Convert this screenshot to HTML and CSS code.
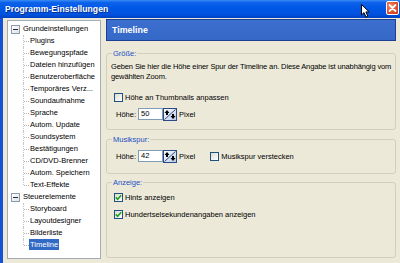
FILE: index.html
```html
<!DOCTYPE html>
<html>
<head>
<meta charset="utf-8">
<link rel="stylesheet" href="styles.css">
</head>
<body>
<div class="window">
  <div class="titlebar">
    <span class="title">Programm-Einstellungen</span>
    <div class="close">
      <svg width="13" height="14" viewBox="0 0 13 14"><path d="M3.5 4 L9.5 10 M9.5 4 L3.5 10" stroke="#fff" stroke-width="1.8" stroke-linecap="round"/></svg>
    </div>
    <svg class="cursor" width="10" height="14" viewBox="0 0 10 14"><path d="M0.5 0.5 L0.5 11 L3 8.6 L5 13 L6.8 12.2 L4.9 7.9 L8.2 7.9 Z" fill="#fff" stroke="#000" stroke-width="1" stroke-linejoin="round"/></svg>
  </div>
  <div class="client">
    <div class="tree">
      <div class="node"><span class="toggle"><span class="minus"></span></span><span>Grundeinstellungen</span></div>
      <div class="children">
        <div class="leaf">Plugins</div>
        <div class="leaf">Bewegungspfade</div>
        <div class="leaf">Dateien hinzufügen</div>
        <div class="leaf">Benutzeroberfläche</div>
        <div class="leaf">Temporäres Verz...</div>
        <div class="leaf">Soundaufnahme</div>
        <div class="leaf">Sprache</div>
        <div class="leaf">Autom. Update</div>
        <div class="leaf">Soundsystem</div>
        <div class="leaf">Bestätigungen</div>
        <div class="leaf">CD/DVD-Brenner</div>
        <div class="leaf">Autom. Speichern</div>
        <div class="leaf">Text-Effekte</div>
      </div>
      <div class="node"><span class="toggle"><span class="minus"></span></span><span>Steuerelemente</span></div>
      <div class="children">
        <div class="leaf">Storyboard</div>
        <div class="leaf">Layoutdesigner</div>
        <div class="leaf">Bilderliste</div>
        <div class="leaf"><span class="selected">Timeline</span></div>
      </div>
    </div>
    <div class="main">
      <div class="header">Timeline</div>
      <div class="group g1">
        <div class="legend">Größe:</div>
        <p class="desc">Geben Sie hier die Höhe einer Spur der Timeline an. Diese Angabe ist unabhängig vom<br>gewählten Zoom.</p>
        <div class="check row-check1"><span class="box"></span><span>Höhe an Thumbnails anpassen</span></div>
        <div class="field">
          <span class="flabel">Höhe:</span>
          <span class="input">50</span>
          <span class="spin"><svg width="14" height="13" viewBox="0 0 14 13"><defs><linearGradient id="sg" x1="0" y1="0" x2="1" y2="1"><stop offset="0" stop-color="#ffffff"/><stop offset="1" stop-color="#b9c9e6"/></linearGradient></defs><rect x="0.5" y="0.5" width="13" height="12" fill="url(#sg)" stroke="#2c4a86"/><path d="M1.5 11.5 L12.5 1.5" stroke="#2c4a86" stroke-width="1"/><path d="M4 2 L6.5 5 L5 5 L5 7 L3 7 L3 5 L1.5 5 Z" fill="#000"/><path d="M10 11 L12.5 8 L11 8 L11 6 L9 6 L9 8 L7.5 8 Z" fill="#000"/></svg></span>
          <span class="unit">Pixel</span>
        </div>
      </div>
      <div class="group g2">
        <div class="legend">Musikspur:</div>
        <div class="field">
          <span class="flabel">Höhe:</span>
          <span class="input">42</span>
          <span class="spin"><svg width="14" height="13" viewBox="0 0 14 13"><defs><linearGradient id="sg2" x1="0" y1="0" x2="1" y2="1"><stop offset="0" stop-color="#ffffff"/><stop offset="1" stop-color="#b9c9e6"/></linearGradient></defs><rect x="0.5" y="0.5" width="13" height="12" fill="url(#sg2)" stroke="#2c4a86"/><path d="M1.5 11.5 L12.5 1.5" stroke="#2c4a86" stroke-width="1"/><path d="M4 2 L6.5 5 L5 5 L5 7 L3 7 L3 5 L1.5 5 Z" fill="#000"/><path d="M10 11 L12.5 8 L11 8 L11 6 L9 6 L9 8 L7.5 8 Z" fill="#000"/></svg></span>
          <span class="unit">Pixel</span>
          <span class="check inline"><span class="box"></span><span>Musikspur verstecken</span></span>
        </div>
      </div>
      <div class="group g3">
        <div class="legend">Anzeige:</div>
        <div class="check c1"><span class="box checked"><svg width="7" height="7" viewBox="0 0 7 7"><path d="M0.8 3.4 L2.6 5.3 L6.2 1.2" fill="none" stroke="#21a121" stroke-width="1.6"/></svg></span><span>Hints anzeigen</span></div>
        <div class="check c2"><span class="box checked"><svg width="7" height="7" viewBox="0 0 7 7"><path d="M0.8 3.4 L2.6 5.3 L6.2 1.2" fill="none" stroke="#21a121" stroke-width="1.6"/></svg></span><span>Hundertselsekundenangaben anzeigen</span></div>
      </div>
    </div>
  </div>
</div>
</body>
</html>
```
FILE: styles.css
```css
* { box-sizing: border-box; }
html, body { margin: 0; padding: 0; }
body {
  width: 400px;
  height: 263px;
  overflow: hidden;
  background: #ece9d8;
  font-family: "Liberation Sans", Arial, sans-serif;
  font-size: 7.5px;
  color: #000;
}
.window {
  width: 400px;
  height: 263px;
  display: flex;
  flex-direction: column;
  background: #ece9d8;
}
.titlebar {
  position: relative;
  height: 18px;
  flex: none;
  display: flex;
  align-items: center;
  padding: 0 1px 1px 5px;
  background: linear-gradient(to bottom, #3a8cf6 0%, #0d62ea 14%, #0058e6 45%, #0052df 80%, #0040c0 100%);
}
.title {
  color: #fff;
  font-weight: bold;
  font-size: 8.6px;
  letter-spacing: 0.05px;
  text-shadow: 1px 1px 0 #0a2f8c;
  flex: 1;
}
.close {
  width: 13px;
  height: 14px;
  border: 1px solid #fff;
  border-radius: 2px;
  background: radial-gradient(circle at 35% 35%, #f08b6a 0%, #e0502a 55%, #c73a18 100%);
  display: flex;
  align-items: center;
  justify-content: center;
  margin-top: -2px;
}
.close svg { display: block; margin: -1px; }
.cursor {
  position: absolute;
  left: 361px;
  top: 4px;
}
.client {
  flex: 1;
  display: flex;
  align-items: flex-start;
  gap: 5px;
  border-left: 3px solid #1552d6;
  padding: 2px 0 0 4px;
}
.tree {
  width: 94px;
  height: 239px;
  background: #fff;
  border: 1px solid #a5acb5;
  padding: 2px 0 0 1px;
  line-height: 12px;
  color: #000;
}
.node {
  height: 12px;
  display: flex;
  align-items: center;
  white-space: nowrap;
}
.toggle {
  width: 9px;
  height: 9px;
  margin: 0 3px 0 2px;
  border: 1px solid #8c9cb0;
  background: linear-gradient(135deg, #fff 0%, #e2e2da 100%);
  display: flex;
  align-items: center;
  justify-content: center;
}
.minus {
  width: 5px;
  height: 1px;
  background: #1a2a60;
}
.children { padding-left: 14px; }
.leaf {
  position: relative;
  height: 12px;
  padding-left: 7px;
  white-space: nowrap;
}
.leaf::before {
  content: "";
  position: absolute;
  left: 1px;
  top: 6px;
  width: 5px;
  border-top: 1px dotted #b4b4b4;
}
.leaf::after {
  content: "";
  position: absolute;
  left: 0;
  top: 0;
  height: 12px;
  border-left: 1px dotted #c8c8c8;
}
.leaf:last-child::after { height: 6px; }
.selected {
  background: #316ac5;
  color: #fff;
  padding: 0 1px;
  margin-left: -1px;
  display: inline-block;
  line-height: 11px;
}
.main {
  width: 290px;
  height: 239px;
  margin-top: -1px;
  display: flex;
  flex-direction: column;
}
.header {
  flex: none;
  height: 22px;
  background: linear-gradient(to bottom, #3c6ecd 0%, #3569c8 100%);
  border: 1px solid #1d3f93;
  color: #fff;
  font-weight: bold;
  font-size: 8.9px;
  display: flex;
  align-items: center;
  padding-left: 5px;
}
.group {
  flex: none;
  border: 1px solid #d0d0bf;
  border-radius: 3px;
  padding: 0 4px;
}
.legend {
  width: fit-content;
  margin: -6px 0 0 1px;
  padding: 0 1px;
  background: #ece9d8;
  color: #2150c4;
  line-height: 11px;
}
.g1 { margin-top: 12px; height: 77px; }
.g2 { margin-top: 9px; height: 35px; }
.g3 { margin-top: 8px; flex: 1; }
.desc {
  margin: 3px 0 0 0;
  line-height: 10px;
  white-space: nowrap;
  letter-spacing: -0.12px;
}
.check {
  display: flex;
  align-items: center;
  height: 12px;
  white-space: nowrap;
}
.box {
  width: 9px;
  height: 9px;
  border: 1px solid #1c5180;
  background: linear-gradient(135deg, #dcdcd4 0%, #fff 100%);
  margin-right: 2px;
  display: flex;
  align-items: center;
  justify-content: center;
  flex: none;
}
.box svg { display: block; }
.row-check1 { margin: 9px 0 0 3px; }
.field {
  display: flex;
  align-items: center;
  height: 12px;
  margin-left: 5px;
  white-space: nowrap;
}
.g1 .field { margin-top: 5px; }
.g2 .field { margin-top: 5px; }
.flabel { width: 22px; }
.input {
  width: 25px;
  height: 12px;
  border: 1px solid #7f9db9;
  background: #fff;
  line-height: 10px;
  padding-left: 2px;
}
.spin { height: 13px; display: flex; }
.spin svg { display: block; }
.unit { margin-left: 2px; }
.check.inline { margin-left: 15px; display: inline-flex; }
.c1 { margin: 3px 0 0 3px; }
.c2 { margin: 5px 0 0 3px; }
```
